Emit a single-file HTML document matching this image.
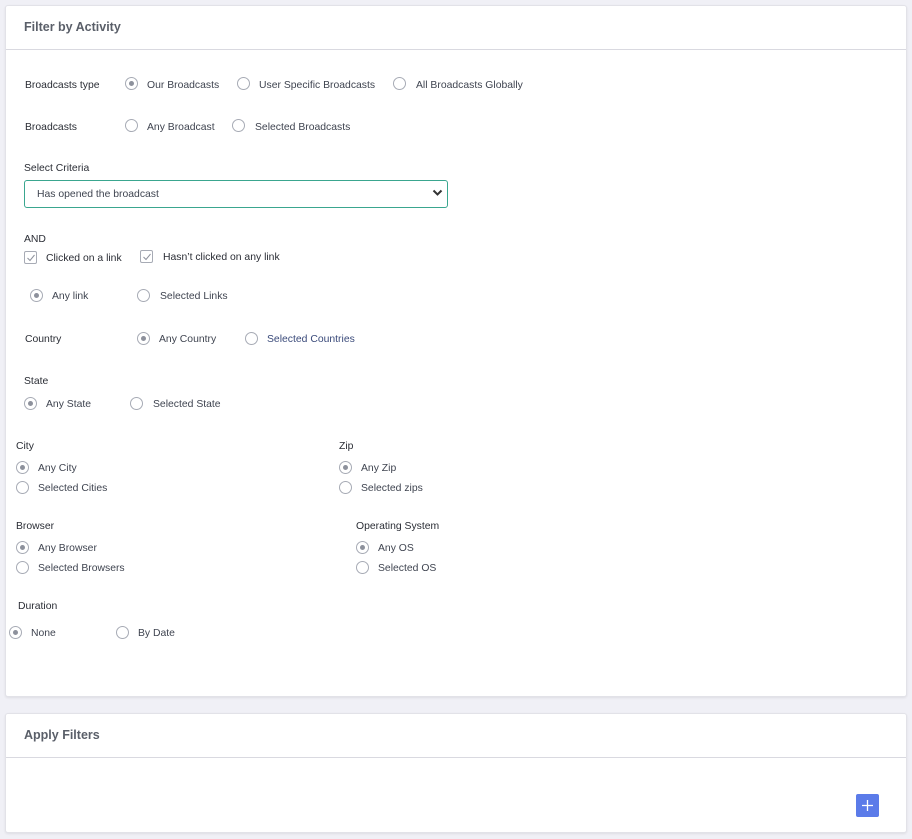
<!DOCTYPE html>
<html><head><meta charset="utf-8"><style>
*{box-sizing:border-box;margin:0;padding:0}
body{width:912px;height:839px;background:#f0f0f6;font-family:"Liberation Sans",sans-serif;position:relative;overflow:hidden}
.card{position:absolute;background:#fff;border:1px solid #e2e2e8;border-radius:3px;box-shadow:0 1px 2px rgba(0,0,0,.08)}
.hl{position:absolute;left:0;right:0;height:1px;background:#d9d9e0}
.h{position:absolute;font-size:12.5px;color:#5a5f69;font-weight:bold;line-height:16px}
.t{position:absolute;font-size:10.4px;color:#3f4450;line-height:14px;white-space:nowrap;margin-top:1.5px}
.l{position:absolute;font-size:10.4px;color:#2a2d35;line-height:14px;white-space:nowrap;margin-top:1.5px}
.r{position:absolute;width:13px;height:13px;border:1px solid #a7abb5;border-radius:50%;background:#fff}
.r.on::after{content:"";position:absolute;left:3px;top:3px;width:5px;height:5px;border-radius:50%;background:#8d919c}
.c{position:absolute;width:13px;height:13px;border:1px solid #a7abb5;border-radius:2px}
</style></head><body>
<div class="card" style="left:5px;top:5px;width:902px;height:692px">
<div class="hl" style="top:43px"></div></div>
<div class="h" style="left:24px;top:19px">Filter by Activity</div>

<div class="l" style="left:25px;top:77px">Broadcasts type</div>
<div class="r on" style="left:125px;top:77px"></div><div class="t" style="left:147px;top:77px">Our Broadcasts</div>
<div class="r" style="left:237px;top:77px"></div><div class="t" style="left:259px;top:77px">User Specific Broadcasts</div>
<div class="r" style="left:393px;top:77px"></div><div class="t" style="left:416px;top:77px">All Broadcasts Globally</div>

<div class="l" style="left:25px;top:119px">Broadcasts</div>
<div class="r" style="left:125px;top:119px"></div><div class="t" style="left:147px;top:119px">Any Broadcast</div>
<div class="r" style="left:232px;top:119px"></div><div class="t" style="left:255px;top:119px">Selected Broadcasts</div>

<div class="l" style="left:24px;top:160px">Select Criteria</div>
<div style="position:absolute;left:24px;top:180px;width:424px;height:28px;border:1px solid #3aa68f;border-radius:3px"></div>
<div class="t" style="left:37px;top:186px">Has opened the broadcast</div>
<svg style="position:absolute;left:432px;top:189px" width="11" height="8" viewBox="0 0 11 8"><path d="M1.5 1.5 5.5 5.5 9.5 1.5" fill="none" stroke="#333" stroke-width="2"/></svg>

<div class="l" style="left:24px;top:231px">AND</div>
<div class="c" style="left:24px;top:251px"></div>
<svg style="position:absolute;left:26px;top:253px" width="10" height="10"><path d="M1.5 5 4 7.5 8.5 2" fill="none" stroke="#8d919c" stroke-width="1"/></svg>
<div class="l" style="left:46px;top:250px">Clicked on a link</div>
<div class="c" style="left:140px;top:250px"></div>
<svg style="position:absolute;left:142px;top:252px" width="10" height="10"><path d="M1.5 5 4 7.5 8.5 2" fill="none" stroke="#8d919c" stroke-width="1"/></svg>
<div class="l" style="left:163px;top:249px">Hasn’t clicked on any link</div>

<div class="r on" style="left:30px;top:289px"></div><div class="t" style="left:52px;top:288px">Any link</div>
<div class="r" style="left:137px;top:289px"></div><div class="t" style="left:160px;top:288px">Selected Links</div>

<div class="l" style="left:25px;top:331px">Country</div>
<div class="r on" style="left:137px;top:332px"></div><div class="t" style="left:159px;top:331px">Any Country</div>
<div class="r" style="left:245px;top:332px"></div><div class="t" style="left:267px;top:331px;color:#3a4a7a">Selected Countries</div>

<div class="l" style="left:24px;top:373px">State</div>
<div class="r on" style="left:24px;top:397px"></div><div class="t" style="left:46px;top:396px">Any State</div>
<div class="r" style="left:130px;top:397px"></div><div class="t" style="left:153px;top:396px">Selected State</div>

<div class="l" style="left:16px;top:438px">City</div>
<div class="r on" style="left:16px;top:461px"></div><div class="t" style="left:38px;top:460px">Any City</div>
<div class="r" style="left:16px;top:481px"></div><div class="t" style="left:38px;top:480px">Selected Cities</div>
<div class="l" style="left:339px;top:438px">Zip</div>
<div class="r on" style="left:339px;top:461px"></div><div class="t" style="left:361px;top:460px">Any Zip</div>
<div class="r" style="left:339px;top:481px"></div><div class="t" style="left:361px;top:480px">Selected zips</div>

<div class="l" style="left:16px;top:518px">Browser</div>
<div class="r on" style="left:16px;top:541px"></div><div class="t" style="left:38px;top:540px">Any Browser</div>
<div class="r" style="left:16px;top:561px"></div><div class="t" style="left:38px;top:560px">Selected Browsers</div>
<div class="l" style="left:356px;top:518px">Operating System</div>
<div class="r on" style="left:356px;top:541px"></div><div class="t" style="left:378px;top:540px">Any OS</div>
<div class="r" style="left:356px;top:561px"></div><div class="t" style="left:378px;top:560px">Selected OS</div>

<div class="l" style="left:18px;top:598px">Duration</div>
<div class="r on" style="left:9px;top:626px"></div><div class="t" style="left:31px;top:625px">None</div>
<div class="r" style="left:116px;top:626px"></div><div class="t" style="left:138px;top:625px">By Date</div>

<div class="card" style="left:5px;top:713px;width:902px;height:120px">
<div class="hl" style="top:43px"></div></div>
<div class="h" style="left:24px;top:727px">Apply Filters</div>
<div style="position:absolute;left:856px;top:794px;width:23px;height:23px;background:#5b7be9;border-radius:2px"></div>
<svg style="position:absolute;left:856px;top:794px" width="23" height="23"><path d="M11.5 6v11M6 11.5h11" stroke="#fff" stroke-width="1.3"/></svg>
</body></html>
